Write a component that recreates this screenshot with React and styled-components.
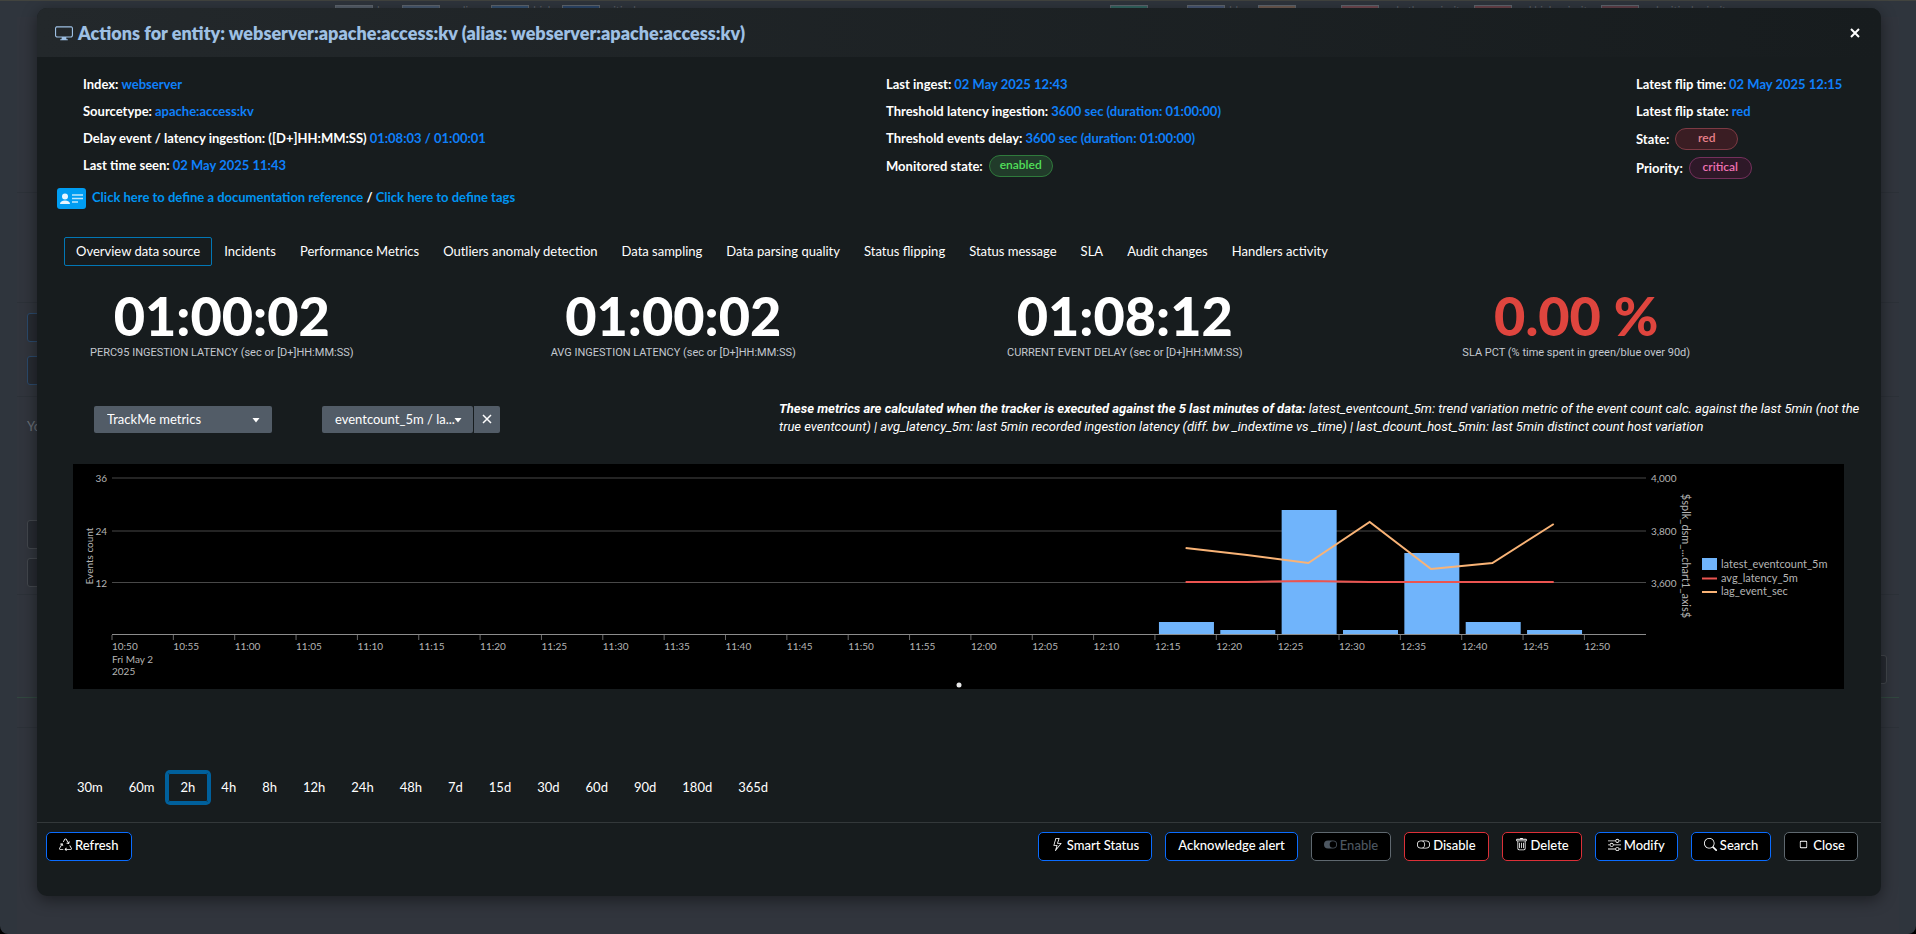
import React, { useState } from 'react';
import styled, { createGlobalStyle, css } from 'styled-components';
import {
  BsDisplay,
  BsRecycle,
  BsLightning,
  BsToggleOn,
  BsToggleOff,
  BsTrash,
  BsSliders,
  BsSearch,
  BsStop,
} from 'react-icons/bs';

const COLORS = {
  modal: '#171c1e',
  backdrop: '#2f353d',
  panel: '#31353d',
  panelLine: '#2c3138',
  title: '#9ec0e4',
  text: '#ffffff',
  muted: '#c3c8d0',
  value: '#0f80fa',
  link: '#0095f2',
  accent: '#0277b5',
  ring: '#00609c',
  primary: '#0a6cff',
  danger: '#dc3038',
  neutral: '#5f686f',
  control: '#525c67',
  line: '#33383a',
  chartText: '#b4b4b4',
  bar: '#70b4fb',
  avg: '#eb5450',
  lag: '#f9b376',
};

const GlobalStyle = createGlobalStyle`
  * {
    box-sizing: border-box;
  }

  body {
    margin: 0;
    background: #000;
    color: ${COLORS.text};
    font-family: Lato, 'Open Sans', sans-serif;
    font-size: 13px;
    line-height: 18px;
  }

  button, select {
    font: inherit;
    color: inherit;
  }
`;

const Page = styled.div`
  position: relative;
  min-height: 100vh;
  padding: 8px 35px 38px 37px;
`;

/* Dimmed dashboard behind the dialog */

const Behind = styled.div`
  position: absolute;
  inset: 0;
  overflow: hidden;
  padding: 0 17px;
  background: ${COLORS.backdrop};
  border-top: 1px solid #42443f;
  border-radius: 0 0 8px 8px;
`;

const BehindPanel = styled.div`
  height: 100%;
  background: ${COLORS.panel};
`;

const BehindSection = styled.div`
  height: ${props => props.height}px;
  padding: ${props => props.pad || 0}px 12px 0 10px;
  border-bottom: 1px solid ${props => props.line || COLORS.panelLine};
  color: #6a6f76;
`;

const BehindText = styled.div`
  margin-bottom: 85px;
`;

const LegendBar = styled.div`
  display: grid;
  grid-template-columns: 775px 1fr;
  padding: 4px 0 0 318px;
  font-size: 11px;
  line-height: 12px;
  white-space: nowrap;
  color: #5b6067;
`;

const LegendGroup = styled.div`
  display: flex;
  gap: 4px;
`;

const Chip = styled.i`
  width: 38px;
  height: 12px;
  margin-left: ${props => (props.first ? 0 : 4)}px;
  background: ${props => props.color};
  border: 1px solid #5f666e;
`;

const GhostBox = styled.div`
  width: 200px;
  height: 29px;
  margin-bottom: ${props => props.gap || 14}px;
  margin-left: ${props => (props.end ? 'auto' : 0)};
  background: #272b32;
  border: 1px solid ${props => props.color || '#43474d'};
  border-radius: 3px;
`;

/* Dialog */

const Dialog = styled.section`
  position: relative;
  background: ${COLORS.modal};
  border-radius: 10px;
  box-shadow: 0 4px 16px rgba(0, 0, 0, 0.45);
`;

const Header = styled.header`
  display: flex;
  align-items: center;
  justify-content: space-between;
  height: 49px;
  padding: 0 20px 0 18px;
  border-radius: 10px 10px 0 0;
  background: linear-gradient(90deg, #23282b, ${COLORS.modal});
`;

const Title = styled.h1`
  display: flex;
  align-items: center;
  gap: 5px;
  margin: 0;
  font-size: 18px;
  line-height: 24px;
  font-weight: 800;
  color: ${COLORS.title};
`;

const CloseIcon = styled.button`
  display: flex;
  padding: 0;
  background: none;
  border: none;
  cursor: pointer;
`;

const Info = styled.div`
  display: grid;
  grid-template-columns: minmax(0, 803fr) minmax(0, 750fr) minmax(0, 200fr);
  padding: 13px 45px 0 46px;
  font-weight: 700;
  white-space: nowrap;
`;

const InfoRow = styled.div`
  display: flex;
  align-items: center;
  gap: 3px;
  height: ${props => (props.tall ? 29 : 27)}px;
`;

const Value = styled.span`
  color: ${COLORS.value};
`;

const BADGES = {
  green: css`
    color: #52e05a;
    background: #213b2a;
    border-color: #2f7a3c;
  `,
  red: css`
    min-width: 63px;
    color: #e8808a;
    background: #3a1d23;
    border-color: #7d3a44;
  `,
  pink: css`
    min-width: 63px;
    color: #ee72b4;
    background: #2e1828;
    border-color: #74305c;
  `,
};

const Badge = styled.span`
  height: 22px;
  margin-left: 3px;
  padding: 0 10px;
  border: 1px solid;
  border-radius: 11px;
  font-size: 12px;
  line-height: 18px;
  font-weight: 600;
  text-align: center;
  ${props => BADGES[props.tone]}
`;

const Docs = styled.div`
  display: flex;
  align-items: center;
  gap: 6px;
  height: 24px;
  margin: 4px 0 0 20px;
  font-weight: 700;

  span {
    padding-bottom: 2px;
  }

  a {
    color: ${COLORS.link};
    text-decoration: none;
  }
`;

const TabBar = styled.nav`
  display: flex;
  margin: ${props => props.top}px 27px 0;
`;

const Tab = styled.button`
  height: 29px;
  padding: 0 11px 2px;
  background: transparent;
  border: 1px solid ${props => (props.active ? COLORS.accent : 'transparent')};
  border-radius: 2px;
  white-space: nowrap;
  cursor: pointer;
`;

const RangeButton = styled(Tab)`
  padding: 0 12px 2px;
  ${props => props.active && css`
    border-color: ${COLORS.ring};
    box-shadow: 0 0 0 3px ${COLORS.ring};
  `}
`;

const Stats = styled.div`
  display: grid;
  grid-template-columns: repeat(4, 1fr);
  column-gap: 136px;
  margin: 20px 147px 0 27px;
  text-align: center;
  white-space: nowrap;
`;

const StatValue = styled.div`
  font-size: 54px;
  line-height: 60px;
  font-weight: 900;
  color: ${props => (props.alert ? '#df453e' : COLORS.text)};
`;

const StatLabel = styled.div`
  font-family: Roboto, sans-serif;
  font-size: 11px;
  line-height: 14px;
  color: ${COLORS.muted};
`;

const Controls = styled.div`
  display: flex;
  align-items: center;
  margin: 40px 18px 0 57px;
`;

const Picker = styled.div`
  position: relative;
  display: flex;
  width: 178px;
  height: 27px;
  margin: 2px 50px 0 0;

  select {
    flex: 1;
    min-width: 0;
    padding: 0 16px 0 13px;
    appearance: none;
    background: ${COLORS.control};
    border: none;
    border-radius: 2px;
  }
`;

const Caret = styled.svg`
  position: absolute;
  top: 12px;
  right: ${props => (props.clearable ? 38 : 12)}px;
  pointer-events: none;
`;

const ClearButton = styled.button`
  display: flex;
  align-items: center;
  justify-content: center;
  width: 26px;
  margin-left: 1px;
  padding: 0;
  background: ${COLORS.control};
  border: none;
  border-radius: 0 2px 2px 0;
`;

const Note = styled.p`
  flex: 1;
  margin: 0 0 0 229px;
  font-family: Roboto, sans-serif;
  font-style: italic;
`;

const ChartBox = styled.div`
  margin: 28px 37px 0 36px;
  background: #000;

  svg {
    display: block;
    width: 100%;
    height: auto;
    font-size: 10px;
    fill: ${COLORS.chartText};
  }
`;

const Footer = styled.footer`
  display: flex;
  gap: 13px;
  margin-top: 20px;
  padding: 9px 23px 35px 9px;
  border-top: 1px solid ${COLORS.line};
`;

const Spacer = styled.div`
  flex: 1;
`;

const ActionButton = styled.button`
  display: flex;
  align-items: center;
  gap: 3px;
  height: 29px;
  padding: 0 12px 4px;
  background: #000;
  border: 1px solid ${props => COLORS[props.tone]};
  border-radius: 5px;
  font-weight: 500;
  white-space: nowrap;
  cursor: pointer;

  &:disabled {
    color: #4d5761;
    cursor: default;
  }
`;

const TABS = [
  'Overview data source',
  'Incidents',
  'Performance Metrics',
  'Outliers anomaly detection',
  'Data sampling',
  'Data parsing quality',
  'Status flipping',
  'Status message',
  'SLA',
  'Audit changes',
  'Handlers activity',
];

const RANGES = ['30m', '60m', '2h', '4h', '8h', '12h', '24h', '48h', '7d', '15d', '30d', '60d', '90d', '180d', '365d'];

const STATS = [
  { value: '01:00:02', label: 'PERC95 INGESTION LATENCY (sec or [D+]HH:MM:SS)' },
  { value: '01:00:02', label: 'AVG INGESTION LATENCY (sec or [D+]HH:MM:SS)' },
  { value: '01:08:12', label: 'CURRENT EVENT DELAY (sec or [D+]HH:MM:SS)' },
  { value: '0.00 %', label: 'SLA PCT (% time spent in green/blue over 90d)', alert: true },
];

const ACTIONS = [
  { label: 'Smart Status', icon: BsLightning, tone: 'primary' },
  { label: 'Acknowledge alert', tone: 'primary' },
  { label: 'Enable', icon: BsToggleOn, tone: 'neutral', disabled: true },
  { label: 'Disable', icon: BsToggleOff, tone: 'danger' },
  { label: 'Delete', icon: BsTrash, tone: 'danger' },
  { label: 'Modify', icon: BsSliders, tone: 'primary' },
  { label: 'Search', icon: BsSearch, tone: 'primary' },
  { label: 'Close', icon: BsStop, tone: 'neutral' },
];

// Chart geometry
const PLOT = { left: 39, right: 1573, bottom: 170.5, step: 61.35 };
const BAR_START = 17;
const BAR_TOPS = [158, 166, 46, 166, 89, 158, 166];
const AVG_POINTS = [118, 118, 117, 118, 118, 118, 118];
const LAG_POINTS = [84, 91, 99, 58, 105, 99, 60];
const GRID = [
  { y: 14, left: '36', right: '4,000' },
  { y: 67, left: '24', right: '3,800' },
  { y: 118.5, left: '12', right: '3,600' },
];

const tickX = i => PLOT.left + i * PLOT.step;

const tickLabel = i => {
  const minutes = 650 + i * 5;
  return `${Math.floor(minutes / 60)}:${String(minutes % 60).padStart(2, '0')}`;
};

const toPoints = values =>
  values.map((y, i) => `${tickX(BAR_START + i) + PLOT.step / 2},${y}`).join(' ');

const EventsChart = () => (
  <svg viewBox="0 0 1771 225" role="img" aria-label="Events count and latency">
    {GRID.map(({ y, left, right }) => (
      <g key={left}>
        <line x1={PLOT.left} x2={PLOT.right} y1={y} y2={y} stroke="#484848" />
        <text x="34" y={y + 4} textAnchor="end">{left}</text>
        <text x="1578" y={y + 4}>{right}</text>
      </g>
    ))}
    {BAR_TOPS.map((top, i) => (
      <rect
        key={i}
        x={tickX(BAR_START + i) + 4}
        y={top}
        width="55"
        height={PLOT.bottom - top}
        fill={COLORS.bar}
      />
    ))}
    <line x1={PLOT.left} x2={PLOT.right} y1={PLOT.bottom} y2={PLOT.bottom} stroke="#8c8c8c" />
    {Array.from({ length: 25 }, (_, i) => (
      <g key={i}>
        <line x1={tickX(i)} x2={tickX(i)} y1="171" y2="176" stroke="#6a6a6a" />
        <text x={tickX(i)} y="186">{tickLabel(i)}</text>
      </g>
    ))}
    <text x={PLOT.left} y="199">Fri May 2</text>
    <text x={PLOT.left} y="211">2025</text>
    <polyline points={toPoints(AVG_POINTS)} fill="none" stroke={COLORS.avg} strokeWidth="2" />
    <polyline points={toPoints(LAG_POINTS)} fill="none" stroke={COLORS.lag} strokeWidth="2" />
    <text transform="translate(20 92) rotate(-90)" textAnchor="middle">Events count</text>
    <g fontSize="11">
      <text transform="translate(1609 92) rotate(90)" textAnchor="middle">$splk_dsm_...chart1_axis$</text>
      <text x="1648" y="104">latest_eventcount_5m</text>
      <text x="1648" y="118">avg_latency_5m</text>
      <text x="1648" y="131">lag_event_sec</text>
    </g>
    <rect x="1629" y="94" width="15" height="12" fill={COLORS.bar} />
    <line x1="1629" x2="1644" y1="114.5" y2="114.5" stroke={COLORS.avg} strokeWidth="2" />
    <line x1="1629" x2="1644" y1="128" y2="128" stroke={COLORS.lag} strokeWidth="2" />
    <circle cx="886" cy="221" r="2.5" fill="#e8e8e8" />
  </svg>
);

const CardIcon = () => (
  <svg width="29" height="21" viewBox="0 0 29 21" aria-hidden="true">
    <rect width="29" height="21" rx="3" fill="#009df2" />
    <circle cx="8" cy="8.5" r="3" fill="#e6f6ff" />
    <path d="M3 16c0-2.4 2-3.6 5-3.6s5 1.200 5 3.600z" fill="#e6f6ff" />
    <path d="M15 7h11M15 10.500h11M15 14h6" stroke="#bfe6fb" strokeWidth="1.500" />
  </svg>
);

const DownCaret = ({ clearable }) => (
  <Caret clearable={clearable ? 1 : undefined} width="8" height="5" viewBox="0 0 8 5">
    <path d="M0.500 0h7L4 4.500z" fill="#fff" />
  </Caret>
);

const App = () => {
  const [tab, setTab] = useState(TABS[0]);
  const [range, setRange] = useState('2h');

  return (
    <>
      <GlobalStyle />
      <Page>
        <Behind aria-hidden="true">
          <LegendBar>
            <LegendGroup>
              <Chip first color="#545d68" /> low
              <Chip color="#47586e" /> medium
              <Chip color="#35506f" /> high
              <Chip color="#2c4668" /> critical
            </LegendGroup>
            <LegendGroup>
              <Chip first color="#336561" /> green
              <Chip color="#475673" /> blue
              <Chip color="#6c5a50" /> orange
              <Chip color="#6f4850" /> red other priority
              <Chip color="#68434a" /> red high priority
              <Chip color="#5f3f48" /> red critical priority
            </LegendGroup>
          </LegendBar>
          <BehindPanel>
            <BehindSection height={176} />
            <BehindSection height={110} />
            <BehindSection height={94} pad={10}>
              <GhostBox color="#2b4a6c" />
              <GhostBox color="#2b4a6c" />
            </BehindSection>
            <BehindSection height={198} pad={20}>
              <BehindText>You can</BehindText>
              <GhostBox gap={9} />
              <GhostBox gap={9} />
            </BehindSection>
            <BehindSection height={103} pad={60} line="#31483f">
              <GhostBox end />
            </BehindSection>
            <BehindSection height={30} />
          </BehindPanel>
        </Behind>

        <Dialog role="dialog" aria-labelledby="dialog-title">
          <Header>
            <Title id="dialog-title">
              <BsDisplay />
              Actions for entity: webserver:apache:access:kv (alias: webserver:apache:access:kv)
            </Title>
            <CloseIcon aria-label="Close dialog">
              <svg width="12" height="12" viewBox="0 0 12 12">
                <path d="M2 2l8 8M10 2l-8 8" stroke="#fff" strokeWidth="2" />
              </svg>
            </CloseIcon>
          </Header>

          <Info>
            <div>
              <InfoRow>Index: <Value>webserver</Value></InfoRow>
              <InfoRow>Sourcetype: <Value>apache:access:kv</Value></InfoRow>
              <InfoRow>
                Delay event / latency ingestion: ([D+]HH:MM:SS) <Value>01:08:03 / 01:00:01</Value>
              </InfoRow>
              <InfoRow>Last time seen: <Value>02 May 2025 11:43</Value></InfoRow>
            </div>
            <div>
              <InfoRow>Last ingest: <Value>02 May 2025 12:43</Value></InfoRow>
              <InfoRow>Threshold latency ingestion: <Value>3600 sec (duration: 01:00:00)</Value></InfoRow>
              <InfoRow>Threshold events delay: <Value>3600 sec (duration: 01:00:00)</Value></InfoRow>
              <InfoRow tall>Monitored state: <Badge tone="green">enabled</Badge></InfoRow>
            </div>
            <div>
              <InfoRow>Latest flip time: <Value>02 May 2025 12:15</Value></InfoRow>
              <InfoRow>Latest flip state: <Value>red</Value></InfoRow>
              <InfoRow tall>State: <Badge tone="red">red</Badge></InfoRow>
              <InfoRow tall>Priority: <Badge tone="pink">critical</Badge></InfoRow>
            </div>
          </Info>

          <Docs>
            <CardIcon />
            <span>
              <a href="#documentation">Click here to define a documentation reference</a>
              {' / '}
              <a href="#tags">Click here to define tags</a>
            </span>
          </Docs>

          <TabBar top={27}>
            {TABS.map(name => (
              <Tab key={name} active={name === tab ? 1 : undefined} onClick={() => setTab(name)}>
                {name}
              </Tab>
            ))}
          </TabBar>

          <Stats>
            {STATS.map(({ value, label, alert }) => (
              <div key={label}>
                <StatValue alert={alert ? 1 : undefined}>{value}</StatValue>
                <StatLabel>{label}</StatLabel>
              </div>
            ))}
          </Stats>

          <Controls>
            <Picker>
              <select aria-label="Metrics source">
                <option>TrackMe metrics</option>
              </select>
              <DownCaret />
            </Picker>
            <Picker>
              <select aria-label="Metrics">
                <option>eventcount_5m / la...</option>
              </select>
              <DownCaret clearable />
              <ClearButton aria-label="Clear selection">
                <svg width="10" height="10" viewBox="0 0 10 10">
                  <path d="M1 1l8 8M9 1l-8 8" stroke="#fff" strokeWidth="1.500" />
                </svg>
              </ClearButton>
            </Picker>
            <Note>
              <b>These metrics are calculated when the tracker is executed against the 5 last minutes of data:</b>
              {' '}latest_eventcount_5m: trend variation metric of the event count calc. against the last 5min
              (not the true eventcount) | avg_latency_5m: last 5min recorded ingestion latency (diff. bw
              _indextime vs _time) | last_dcount_host_5min: last 5min distinct count host variation
            </Note>
          </Controls>

          <ChartBox>
            <EventsChart />
          </ChartBox>

          <TabBar top={84}>
            {RANGES.map(name => (
              <RangeButton key={name} active={name === range ? 1 : undefined} onClick={() => setRange(name)}>
                {name}
              </RangeButton>
            ))}
          </TabBar>

          <Footer>
            <ActionButton tone="primary"><BsRecycle /> Refresh</ActionButton>
            <Spacer />
            {ACTIONS.map(({ label, icon: Icon, tone, disabled }) => (
              <ActionButton key={label} tone={tone} disabled={disabled}>
                {Icon && <Icon />} {label}
              </ActionButton>
            ))}
          </Footer>
        </Dialog>
      </Page>
    </>
  );
};

export default App;
